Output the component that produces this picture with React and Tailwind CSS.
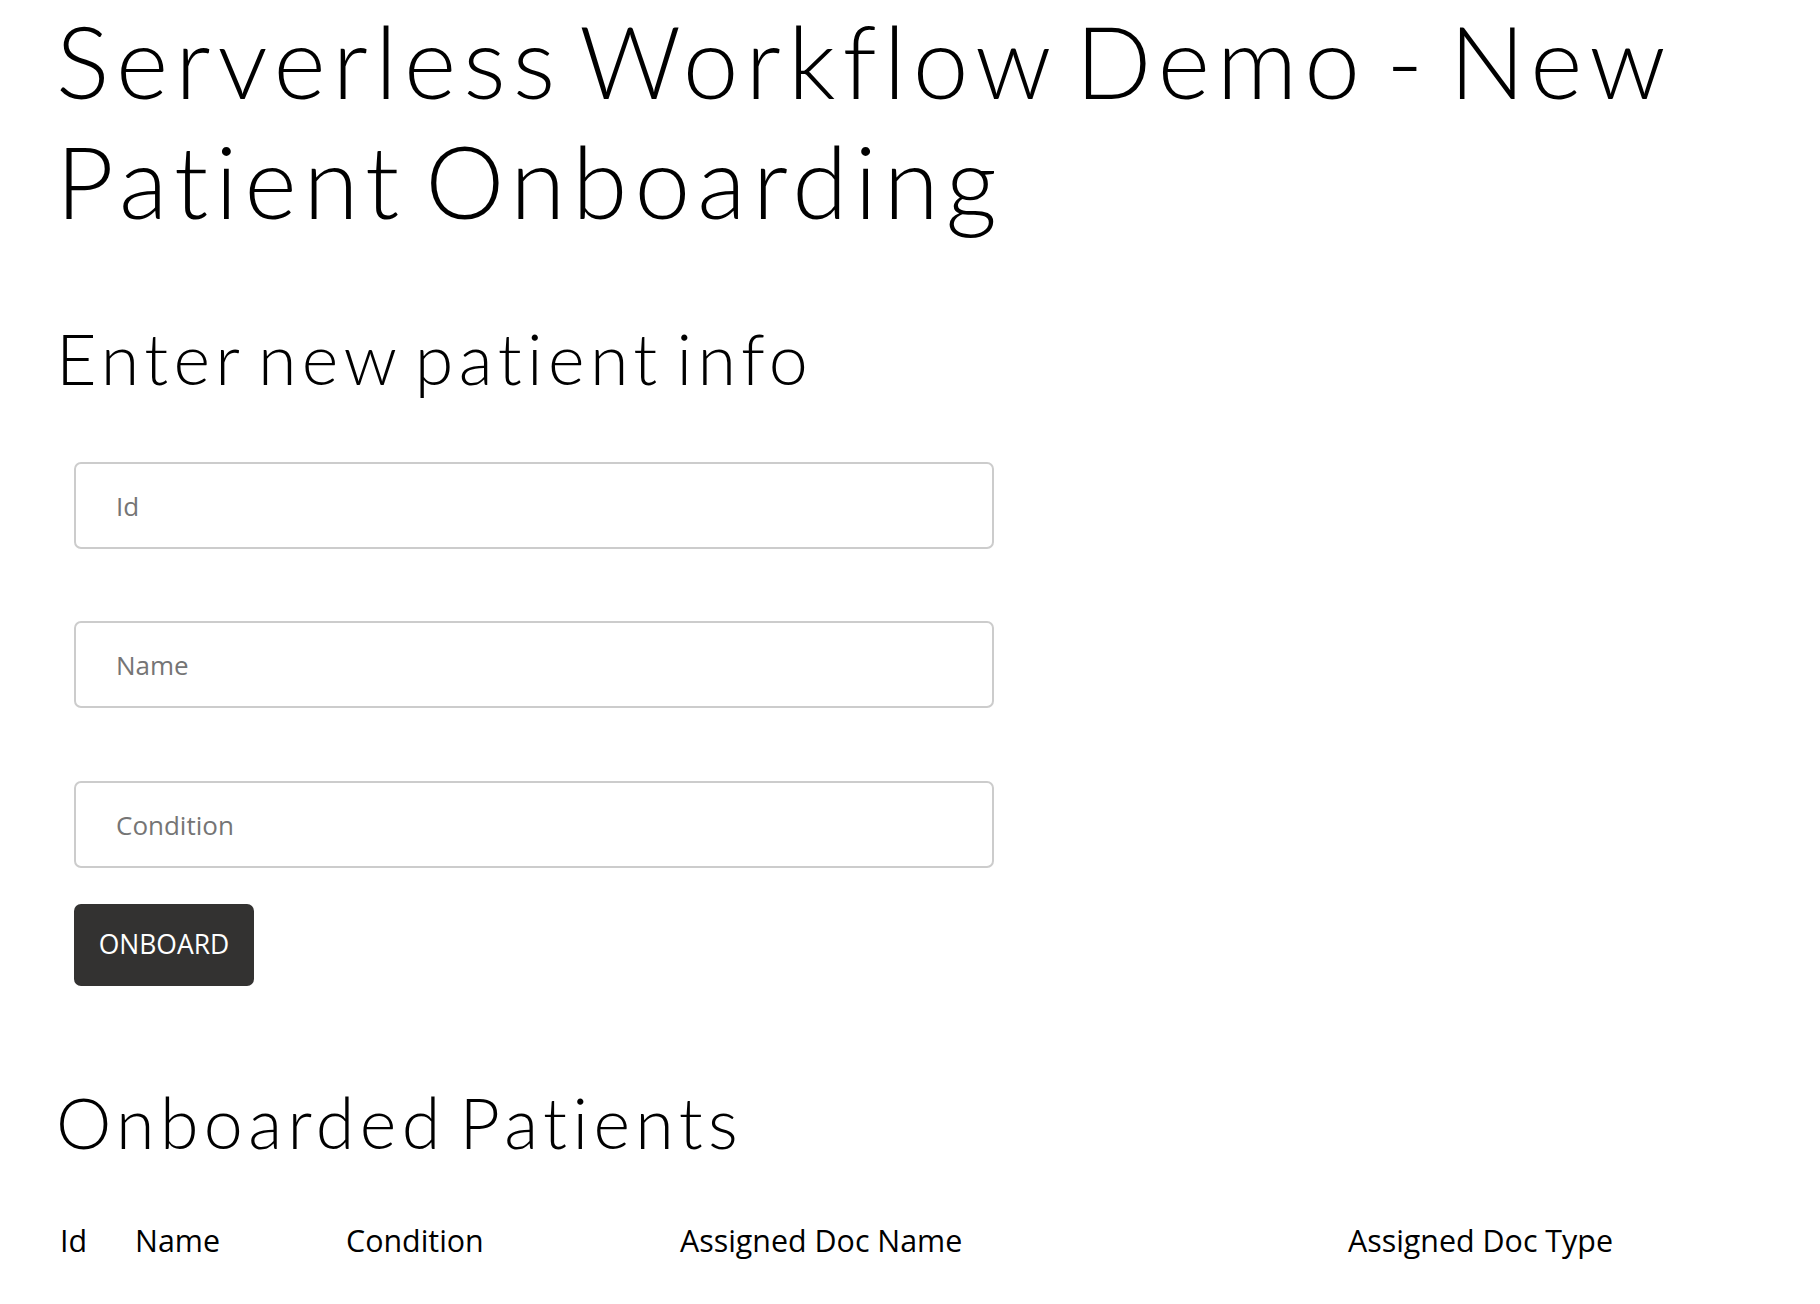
import React, { useState } from 'react';

const headingFont = { fontFamily: 'Lato, "Noto Sans", sans-serif' };

function PatientForm({ onAdd }) {
  const [form, setForm] = useState({ id: '', name: '', condition: '' });

  const handleSubmit = (e) => {
    e.preventDefault();
    if (!form.id.trim()) return;
    onAdd(form);
    setForm({ id: '', name: '', condition: '' });
  };

  return (
    <form onSubmit={handleSubmit} className="ml-[18px] mt-[62px] flex flex-col">
      <input
        value={form.id}
        onChange={(e) => setForm({ ...form, id: e.target.value })}
        placeholder="Id"
        className="w-[920px] h-[87px] border-2 border-[#cccccc] rounded-[7px] pl-[40px] text-[26px] text-[#333] placeholder:text-[#757575] outline-none"
      />
      <input
        value={form.name}
        onChange={(e) => setForm({ ...form, name: e.target.value })}
        placeholder="Name"
        className="mt-[72px] w-[920px] h-[87px] border-2 border-[#cccccc] rounded-[7px] pl-[40px] text-[26px] text-[#333] placeholder:text-[#757575] outline-none"
      />
      <input
        value={form.condition}
        onChange={(e) => setForm({ ...form, condition: e.target.value })}
        placeholder="Condition"
        className="mt-[73px] w-[920px] h-[87px] border-2 border-[#cccccc] rounded-[7px] pl-[40px] text-[26px] text-[#333] placeholder:text-[#757575] outline-none"
      />
      <button
        type="submit"
        className="mt-[36px] w-[180px] h-[82px] bg-[#333231] text-white text-[26.5px] rounded-[7px] flex items-center justify-center"
      >
        ONBOARD
      </button>
    </form>
  );
}

export default function App() {
  const [patients, setPatients] = useState([]);

  return (
    <div className="min-h-screen bg-white text-black pl-[56px] pb-[40px]" style={{ fontFamily: '"Open Sans", "Liberation Sans", sans-serif' }}>
      <h1 className="max-w-[1700px] text-[100px] leading-[120px] font-light tracking-[0.07em] [word-spacing:-0.15em]" style={headingFont}>
        Serverless Workflow Demo - New Patient Onboarding
      </h1>

      <h2 className="mt-[76px] text-[70px] leading-[84px] font-light tracking-[0.077em] [word-spacing:-0.15em]" style={headingFont}>
        Enter new patient info
      </h2>

      <PatientForm onAdd={(p) => setPatients([...patients, { ...p, docName: '', docType: '' }])} />

      <h2 className="mt-[94px] text-[70px] leading-[84px] font-light tracking-[0.077em] [word-spacing:-0.15em]" style={headingFont}>
        Onboarded Patients
      </h2>

      {/* table */}
      <div className="ml-[4px] mt-[54px] text-[30.4px] leading-[45px] font-medium">
        <div className="grid grid-cols-[75px_211px_334px_668px_1fr]">
          <div>Id</div>
          <div>Name</div>
          <div>Condition</div>
          <div>Assigned Doc Name</div>
          <div>Assigned Doc Type</div>
        </div>
        {patients.map((p, i) => (
          <div key={i} className="grid grid-cols-[75px_211px_334px_668px_1fr]">
            <div>{p.id}</div>
            <div>{p.name}</div>
            <div>{p.condition}</div>
            <div>{p.docName}</div>
            <div>{p.docType}</div>
          </div>
        ))}
      </div>
    </div>
  );
}
